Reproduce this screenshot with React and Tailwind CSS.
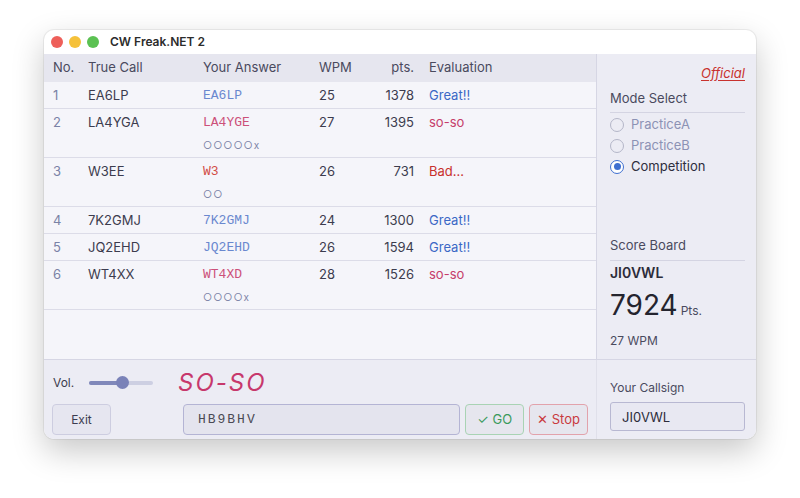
import { useState } from 'react'

const rows = [
  { no: 1, call: 'EA6LP', answer: 'EA6LP', wpm: 25, pts: 1378, result: 'great' },
  { no: 2, call: 'LA4YGA', answer: 'LA4YGE', marks: '○○○○○x', wpm: 27, pts: 1395, result: 'soso' },
  { no: 3, call: 'W3EE', answer: 'W3', marks: '○○', wpm: 26, pts: 731, result: 'bad' },
  { no: 4, call: '7K2GMJ', answer: '7K2GMJ', wpm: 24, pts: 1300, result: 'great' },
  { no: 5, call: 'JQ2EHD', answer: 'JQ2EHD', wpm: 26, pts: 1594, result: 'great' },
  { no: 6, call: 'WT4XX', answer: 'WT4XD', marks: '○○○○x', wpm: 28, pts: 1526, result: 'soso' },
]

const answerColor = {
  great: 'text-[#6a88cf]',
  soso: 'text-[#cc5079]',
  bad: 'text-[#d24c46]',
}

const evalText = {
  great: { label: 'Great!!', cls: 'text-[#3b68c6]' },
  soso: { label: 'so-so', cls: 'text-[#c63d6b]' },
  bad: { label: 'Bad...', cls: 'text-[#c8302c]' },
}

const mono = { fontFamily: '"Liberation Mono", "DejaVu Sans Mono", monospace' }

function ResultRow({ row }) {
  const ev = evalText[row.result]
  return (
    <div className={`border-b border-[#dcdce8] ${row.marks ? 'h-[49px]' : 'h-[27px]'}`}>
      <div className="flex h-[26px] items-center pt-[2px] text-[13px] text-[#3c3c4e]">
        <div className="w-[44px] pl-[9px] text-[#7a82a6]">{row.no}</div>
        <div className="w-[115px]">{row.call}</div>
        <div className={`w-[116px] text-[13px] ${answerColor[row.result]}`} style={mono}>{row.answer}</div>
        <div className="w-[50px]">{row.wpm}</div>
        <div className="w-[45px] text-right">{row.pts}</div>
        <div className={`pl-[15px] ${ev.cls}`}>{ev.label}</div>
      </div>
      {row.marks && (
        <div className="flex h-[20px] items-center pl-[159px] text-[10px] tracking-[1px] text-[#7d84a8]">
          {row.marks}
        </div>
      )}
    </div>
  )
}

function Radio({ label, checked }) {
  return (
    <div className="flex h-[21px] items-center gap-[7px]">
      <span
        className={`flex h-[14px] w-[14px] items-center justify-center rounded-full border ${
          checked ? 'border-[#3e6fd0] bg-white' : 'border-[#b4b6c8] bg-[#ececf4]'
        }`}
      >
        {checked && <span className="h-[7px] w-[7px] rounded-full bg-[#3e6fd0]" />}
      </span>
      <span className={`text-[13px] ${checked ? 'text-[#2e2e3e]' : 'text-[#8c92b4]'}`}>{label}</span>
    </div>
  )
}

export default function App() {
  const [callsign, setCallsign] = useState('JI0VWL')
  const [entry, setEntry] = useState('HB9BHV')

  return (
    <div className="min-h-[498px] bg-white pl-[44px] pt-[30px]" style={{ fontFamily: 'Inter, "Noto Sans", sans-serif' }}>
      <div className="flex h-[409px] w-[712px] flex-col overflow-hidden rounded-[10px] bg-white shadow-[0_12px_32px_rgba(0,0,0,0.22),0_0_0_1px_rgba(0,0,0,0.06)]">
        {/* Title bar */}
        <div className="flex h-[24px] shrink-0 items-center pl-[7px]">
          <div className="flex gap-[6px]">
            <span className="h-[12px] w-[12px] rounded-full bg-[#ee5f5a]" />
            <span className="h-[12px] w-[12px] rounded-full bg-[#f5c13a]" />
            <span className="h-[12px] w-[12px] rounded-full bg-[#5bc152]" />
          </div>
          <span className="ml-[11px] text-[12px] font-semibold text-[#2c2c2c]">CW Freak.NET 2</span>
        </div>

        {/* Main area */}
        <div className="flex h-[306px] shrink-0 border-b border-[#d6d6e4]">
          <div className="w-[553px] border-r border-[#d6d6e4] bg-[#f5f5fa]">
            <div className="flex h-[28px] items-center bg-[#e6e6ef] text-[13px] text-[#4a4a5e]">
              <div className="w-[44px] pl-[9px]">No.</div>
              <div className="w-[115px]">True Call</div>
              <div className="w-[116px]">Your Answer</div>
              <div className="w-[50px]">WPM</div>
              <div className="w-[45px] text-right">pts.</div>
              <div className="pl-[15px]">Evaluation</div>
            </div>
            {rows.map((r) => (
              <ResultRow key={r.no} row={r} />
            ))}
          </div>

          <div className="flex flex-1 flex-col bg-[#ececf4] pl-[13px] pr-[11px]">
            <div className="mt-[10px] text-right text-[13px] italic text-[#c8322e] underline underline-offset-2">Official</div>
            <div className="mt-[5px] border-b border-[#d4d4e2] pb-[4px] text-[13px] text-[#4a4a5e]">Mode Select</div>
            <div className="mt-[1px]">
              <Radio label="PracticeA" />
              <Radio label="PracticeB" />
              <Radio label="Competition" checked />
            </div>
            <div className="mt-[59px] border-b border-[#d4d4e2] pb-[4px] text-[13px] text-[#4a4a5e]">Score Board</div>
            <div className="mt-[1px] text-[14px] font-semibold text-[#2c2c3a]">JI0VWL</div>
            <div className="mt-[3px] flex items-baseline gap-[3px]">
              <span className="text-[28px] leading-[38px] text-[#24242e]">7924</span>
              <span className="text-[12px] text-[#4a4a5e]">Pts.</span>
            </div>
            <div className="mt-[8px] text-[12px] text-[#4a4a5e]">27 WPM</div>
          </div>
        </div>

        {/* Controls */}
        <div className="flex flex-1 bg-[#ececf4]">
          <div className="w-[553px] border-r border-[#e0e0ea] pl-[8px] pr-[8px]">
            <div className="flex h-[44px] items-center pt-[1px]">
              <span className="ml-[1px] w-[36px] text-[12px] text-[#3c3c4e]">Vol.</span>
              <div className="relative h-[14px] w-[64px]">
                <div className="absolute left-0 top-[5px] h-[4px] w-[64px] rounded-full bg-[#cdcfe2]" />
                <div className="absolute left-0 top-[5px] h-[4px] w-[34px] rounded-full bg-[#8088ba]" />
                <div className="absolute left-[27px] top-0 h-[13px] w-[13px] rounded-full bg-[#7a82b8]" />
              </div>
              <span className="ml-[25px] text-[24px] italic tracking-[2px] text-[#c7386c]">SO-SO</span>
            </div>
            <div className="flex items-center">
              <button className="h-[31px] w-[59px] rounded-[4px] border border-[#cdcde0] bg-[#e6e6f0] text-[12px] text-[#3c3c50]">
                Exit
              </button>
              <input
                value={entry}
                onChange={(e) => setEntry(e.target.value)}
                className="ml-[72px] h-[31px] w-[278px] rounded-[4px] border border-[#b4b4d4] bg-[#e4e4ee] pl-[14px] text-[13px] tracking-[2px] text-[#4a4a54] outline-none"
                style={mono}
              />
              <button className="ml-[5px] h-[31px] w-[59px] rounded-[4px] border border-[#a9d3b4] bg-[#e6e6ee] text-[13px] text-[#3b9a5c]">
                ✓ GO
              </button>
              <button className="ml-[5px] h-[31px] w-[59px] rounded-[4px] border border-[#e2a2ab] bg-[#e6e6ee] text-[13px] text-[#c93a3e]">
                ✕ Stop
              </button>
            </div>
          </div>
          <div className="flex-1 pl-[13px] pr-[11px]">
            <div className="mt-[19px] text-[12px] text-[#4a4a5e]">Your Callsign</div>
            <input
              value={callsign}
              onChange={(e) => setCallsign(e.target.value)}
              className="mt-[5px] h-[29px] w-[135px] rounded-[3px] border border-[#b8b8d2] bg-[#e8e8f2] pl-[11px] text-[13px] text-[#2c2c3a] outline-none"
            />
          </div>
        </div>
      </div>
    </div>
  )
}
